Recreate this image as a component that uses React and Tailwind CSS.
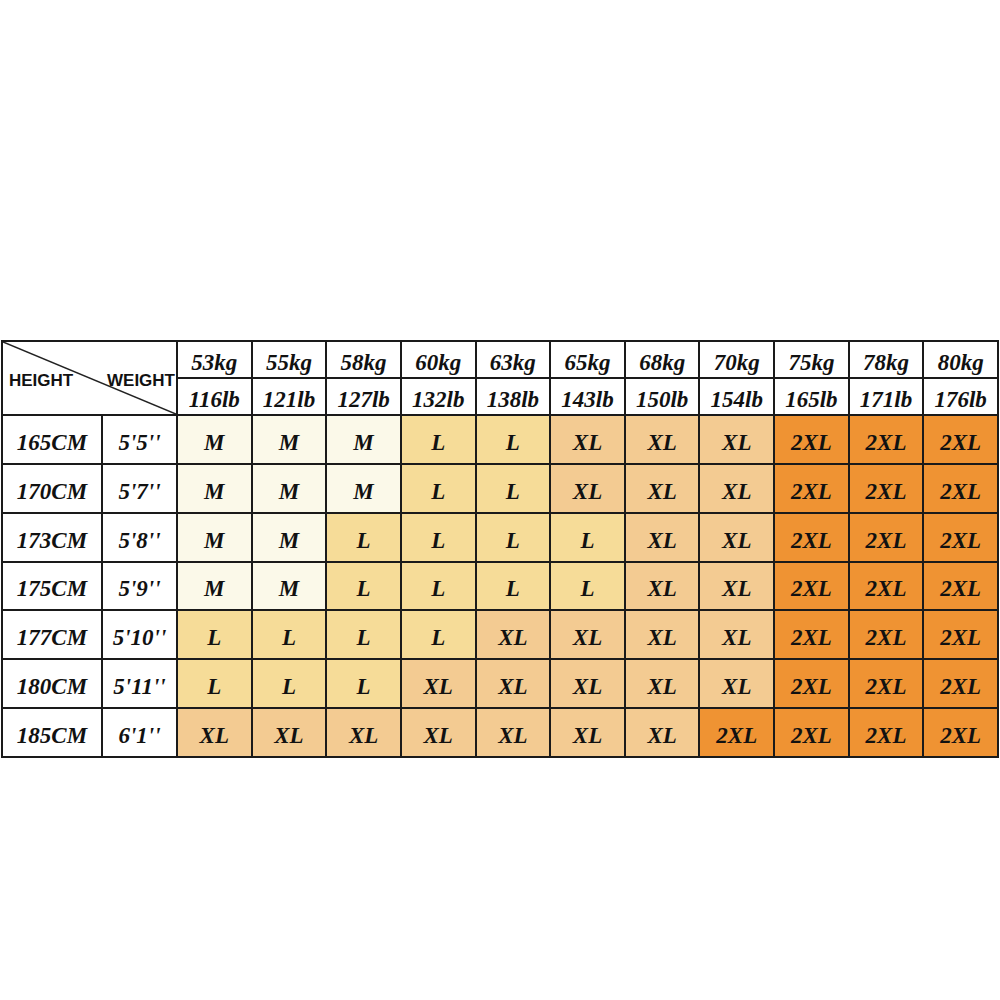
import React from "react";

const kg = ["53kg","55kg","58kg","60kg","63kg","65kg","68kg","70kg","75kg","78kg","80kg"];
const lb = ["116lb","121lb","127lb","132lb","138lb","143lb","150lb","154lb","165lb","171lb","176lb"];
const rows = [
  ["165CM","5'5''",["M","M","M","L","L","XL","XL","XL","2XL","2XL","2XL"]],
  ["170CM","5'7''",["M","M","M","L","L","XL","XL","XL","2XL","2XL","2XL"]],
  ["173CM","5'8''",["M","M","L","L","L","L","XL","XL","2XL","2XL","2XL"]],
  ["175CM","5'9''",["M","M","L","L","L","L","XL","XL","2XL","2XL","2XL"]],
  ["177CM","5'10''",["L","L","L","L","XL","XL","XL","XL","2XL","2XL","2XL"]],
  ["180CM","5'11''",["L","L","L","XL","XL","XL","XL","XL","2XL","2XL","2XL"]],
  ["185CM","6'1''",["XL","XL","XL","XL","XL","XL","XL","2XL","2XL","2XL","2XL"]],
];

const bg = {
  M: "bg-[#fbf9e9]",
  L: "bg-[#f6dc98]",
  XL: "bg-[#f3cb92]",
  "2XL": "bg-[#ef9333]",
};

const serif = "font-['Liberation_Serif',serif] italic font-bold text-[23px] text-[#111] leading-none";

export default function App() {
  return (
    <div className="w-[1000px] h-[1000px] bg-white pt-[340px] pl-[1px]">
      <div className="w-[998px] h-[418px] bg-[#1a1a1a] p-[2px] grid gap-[2px] grid-cols-[98px_73px_repeat(11,1fr)] grid-rows-[35px_35px_repeat(7,1fr)]">
        <div className="col-span-2 row-span-2 bg-white relative font-['Liberation_Sans',sans-serif] font-bold text-[17px] text-[#111] leading-none">
          <svg className="absolute inset-0 w-full h-full" viewBox="0 0 173 72" preserveAspectRatio="none">
            <line x1="0" y1="0" x2="173" y2="72" stroke="#222" strokeWidth="1.6" />
          </svg>
          <span className="absolute left-[6px] top-[30px]">HEIGHT</span>
          <span className="absolute right-[1px] top-[30px]">WEIGHT</span>
        </div>
        {kg.map((k) => (
          <div key={k} className={`bg-white flex items-center justify-center pt-[5px] ${serif}`}>{k}</div>
        ))}
        {lb.map((k) => (
          <div key={k} className={`bg-white flex items-center justify-center pt-[5px] ${serif}`}>{k}</div>
        ))}
        {rows.map(([cm, ft, sizes]) => (
          <React.Fragment key={cm}>
            <div className={`bg-white flex items-center justify-center pt-[6px] ${serif}`}>{cm}</div>
            <div className={`bg-white flex items-center justify-center pt-[6px] ${serif}`}>{ft}</div>
            {sizes.map((s, i) => (
              <div key={i} className={`${bg[s]} flex items-center justify-center pt-[6px] ${serif}`}>{s}</div>
            ))}
          </React.Fragment>
        ))}
      </div>
    </div>
  );
}
